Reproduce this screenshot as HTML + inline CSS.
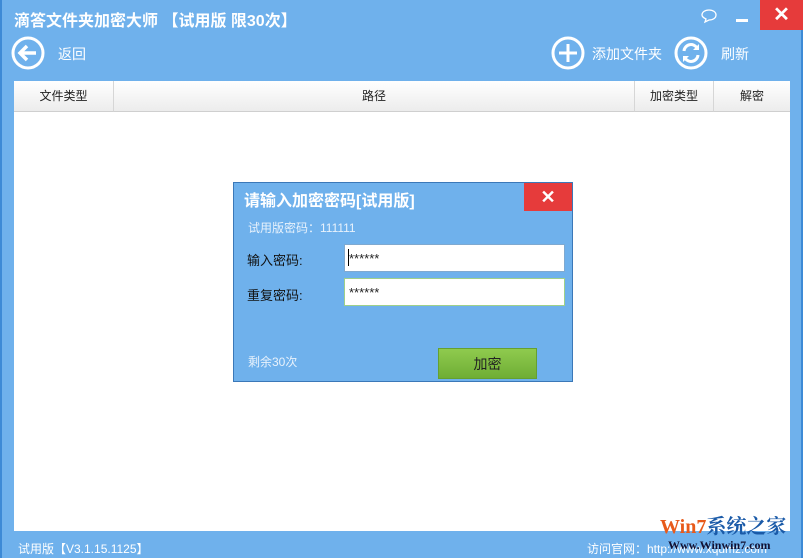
<!DOCTYPE html>
<html><head><meta charset="utf-8"><style>
*{margin:0;padding:0;box-sizing:border-box}
body{width:803px;height:558px;background:#6fb1ec;position:relative;overflow:hidden;font-family:"Liberation Sans","Noto Sans CJK SC",sans-serif;color:#fff}
.a{position:absolute}
.th{position:absolute;top:81px;height:31px;background:linear-gradient(#fff,#ececec);border-right:1px solid #d6d6d6;border-bottom:1px solid #cfcfcf;color:#222;font-size:12px;text-align:center;line-height:31px}
</style></head><body>
<div class="a" style="left:0;top:0;width:2px;height:558px;background:#3d8ad6"></div>
<div class="a" style="left:801px;top:0;width:2px;height:558px;background:#3d8ad6"></div>
<div class="a" style="left:14px;top:7px;font-size:16px;font-weight:bold">滴答文件夹加密大师 【试用版 限30次】</div>
<svg class="a" style="left:700px;top:8px" width="18" height="16"><path d="M9 2c4 0 7 2 7 5s-3 5-7 5l-4 2 1-3C4 10 2 9 2 7c0-3 3-5 7-5z" fill="none" stroke="#fff" stroke-width="1.3"/></svg>
<div class="a" style="left:736px;top:19px;width:12px;height:3px;background:#fff"></div>
<div class="a" style="left:760px;top:0;width:43px;height:30px;background:#e63b3b;text-align:center;line-height:30px;font-size:20px;font-weight:bold">✕</div>
<svg class="a" style="left:11px;top:36px" width="34" height="34"><circle cx="17" cy="17" r="15" fill="none" stroke="#fff" stroke-width="3"/><path d="M25 17H10M16 10l-7 7 7 7" fill="none" stroke="#fff" stroke-width="3.5"/></svg>
<div class="a" style="left:58px;top:44px;font-size:14px">返回</div>
<svg class="a" style="left:551px;top:36px" width="34" height="34"><circle cx="17" cy="17" r="15" fill="none" stroke="#fff" stroke-width="3"/><path d="M17 8v18M8 17h18" stroke="#fff" stroke-width="3"/></svg>
<div class="a" style="left:592px;top:44px;font-size:14px">添加文件夹</div>
<svg class="a" style="left:674px;top:36px" width="34" height="34"><circle cx="17" cy="17" r="15" fill="none" stroke="#fff" stroke-width="3"/><path d="M10 15a7 7 0 0 1 13-3M24 19a7 7 0 0 1-13 3" fill="none" stroke="#fff" stroke-width="3"/><path d="M25 8v6h-6zM9 26v-6h6z" fill="#fff"/></svg>
<div class="a" style="left:721px;top:44px;font-size:14px">刷新</div>
<div class="a" style="left:14px;top:81px;width:776px;height:450px;background:#fff"></div>
<div class="th" style="left:14px;width:100px">文件类型</div>
<div class="th" style="left:114px;width:521px">路径</div>
<div class="th" style="left:635px;width:79px">加密类型</div>
<div class="th" style="left:714px;width:76px;border-right:none">解密</div>
<div class="a" style="left:233px;top:182px;width:340px;height:200px;background:#6fb1ec;border:1px solid #3b78b8"></div>
<div class="a" style="left:244px;top:187px;font-size:16px;font-weight:bold">请输入加密密码[试用版]</div>
<div class="a" style="left:524px;top:183px;width:48px;height:28px;background:#e63b3b;text-align:center;line-height:28px;font-size:18px;font-weight:bold">✕</div>
<div class="a" style="left:248px;top:219px;font-size:12px;color:#e8f2fc">试用版密码：111111</div>
<div class="a" style="left:247px;top:250px;font-size:13px;color:#111">输入密码:</div>
<div class="a" style="left:247px;top:285px;font-size:13px;color:#111">重复密码:</div>
<div class="a" style="left:344px;top:244px;width:221px;height:28px;background:#fff;border:1px solid #7fa9d0;color:#222;font-size:13px;line-height:28px;padding-left:4px">******</div>
<div class="a" style="left:348px;top:249px;width:1px;height:17px;background:#000"></div>
<div class="a" style="left:344px;top:278px;width:221px;height:28px;background:#fff;border:1px solid #9fd08a;color:#222;font-size:13px;line-height:28px;padding-left:4px">******</div>
<div class="a" style="left:248px;top:353px;font-size:12px;color:#e8f2fc">剩余30次</div>
<div class="a" style="left:438px;top:348px;width:99px;height:31px;background:linear-gradient(#8fcb4e,#6fae35);border:1px solid #66a030;color:#222;font-size:14px;text-align:center;line-height:30px">加密</div>
<div class="a" style="left:18px;top:540px;font-size:12px">试用版【V3.1.15.1125】</div>
<div class="a" style="left:587px;top:540px;font-size:12px">访问官网：http://www.xqumz.com</div>
<div class="a" style="left:660px;top:510px;font-size:20px;font-weight:bold;color:#e85a1a;font-family:'Liberation Serif','Noto Serif CJK SC',serif">Win7<span style="color:#1a5aa8">系统之家</span></div>
<div class="a" style="left:668px;top:538px;font-size:12px;font-weight:bold;color:#113;font-family:'Liberation Serif',serif">Www.Winwin7.com</div>
</body></html>
